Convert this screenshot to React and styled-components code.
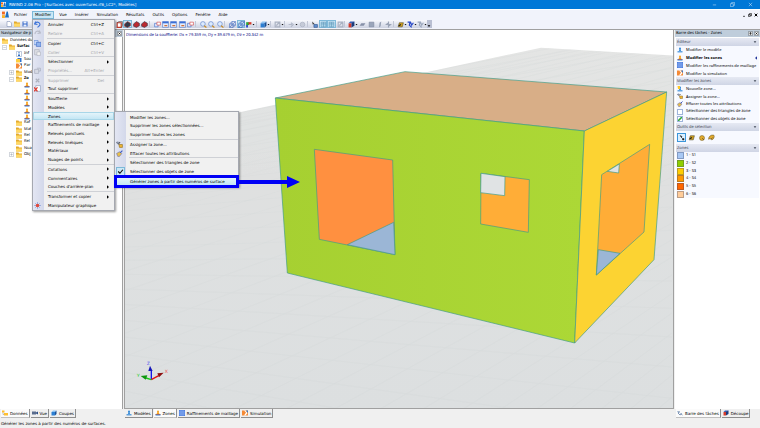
import React from "react";
import styled, { createGlobalStyle, css } from "styled-components";

const ui = '"DejaVu Sans", "Liberation Sans", sans-serif';
const compact = '"Noto Sans", "Liberation Sans", sans-serif';

const GlobalStyle = createGlobalStyle`
  * { box-sizing: border-box; }
  body {
    margin: 0;
    overflow: hidden;
    background: #f0f0f0;
    color: #000;
    font: 4px/7px ${ui};
    text-rendering: geometricPrecision;
  }
  button, input { font: inherit; color: inherit; margin: 0; padding: 0; border: 0; background: none; text-align: left; }
  ul { list-style: none; margin: 0; padding: 0; }
  svg { display: block; }
`;

/* ---------- icons, drawn on a 12 x 12 grid ---------- */

const cone = (x, c = "#2f86d6") => (
  <>
    <circle cx={x} cy="3" r="2" fill={c} />
    <path d={`M${x - 1} 4h2l1 4h-4z`} fill={c} />
    <path d={`M${x - 5} 8h10v3h-10z`} fill={c} opacity=".75" />
  </>
);

const shapes = {
  app: (
    <>
      <path d="M0 0h12v12H0z" fill="#f6f6f6" />
      <path d="M0 1h5v5H0z" fill="#f26a21" />
      <path d="M0 7h5v5H0z" fill="#f7b32b" />
      <path d="M5 11L8 1h2l2 10z" fill="#1c6fc4" />
    </>
  ),
  doc: <path d="M2 1h6l3 3v7H2z" fill="#fff" stroke="#6c7fa8" />,
  folder: (
    <>
      <path d="M0 1h5l1 2h6v8H0z" fill="#e3a92c" />
      <path d="M0 5h12v6H0z" fill="#ffd866" />
    </>
  ),
  save: (
    <>
      <path d="M1 1h10v10H1z" fill="#3567c9" />
      <path d="M3 1h6v4H3zM3 7h6v4H3z" fill="#e8effc" />
    </>
  ),
  undo: <path d="M3 1L1 5l5 1M2 4c4-4 9-1 8 3-1 2-3 3-4 4" fill="none" stroke="#3f74d8" strokeWidth="2" />,
  redo: <path d="M9 1l2 4-5 1M10 4C6 0 1 3 2 7" fill="none" stroke="#b9bdc9" strokeWidth="2" />,
  copy: (
    <>
      <path d="M0 1h7v7H0z" fill="#cfe0fb" stroke="#4a78d0" />
      <path d="M4 4h8v7H4z" fill="#8fb4ee" stroke="#3560c0" />
    </>
  ),
  paste: (
    <>
      <path d="M1 1h8v9H1z" fill="#dcdee4" stroke="#a9adb8" />
      <path d="M5 5h6v6H5z" fill="#f4f4f4" stroke="#a9adb8" />
    </>
  ),
  props: <path d="M1 4h7v7H1zM5 2h6v5H8" fill="#d7dae4" stroke="#a0a6b6" />,
  del: <path d="M3 3l6 6M9 3l-6 6" stroke="#aeb2be" strokeWidth="2" />,
  delAll: (
    <>
      <path d="M3 1h8v10H3z" fill="#fff" stroke="#8090b0" />
      <path d="M0 4l6 7M6 4l-6 7" stroke="#e0372b" strokeWidth="2" />
    </>
  ),
  gizmo: (
    <>
      <path d="M6 0v12M0 6h12M2 2l8 8M10 2l-8 8" stroke="#6f8fd8" />
      <circle cx="6" cy="6" r="3" fill="#e34a3a" />
    </>
  ),
  assign: (
    <>
      <path d="M1 2l3 3 3-3" stroke="#555" strokeWidth="2" fill="none" />
      <circle cx="3" cy="3" r="2" fill="#8792a8" />
      <path d="M5 6h6v5H6z" fill="#f2b632" stroke="#8a6b1c" />
    </>
  ),
  erase: (
    <>
      <path d="M1 6l5-3 4 3-4 5H3z" fill="#e7c04a" stroke="#6d6fb4" />
      <path d="M7 5l4-4" stroke="#3c5bc2" strokeWidth="2" />
    </>
  ),
  info: (
    <>
      <path d="M1 1h10v10H1z" fill="#fff" stroke="#7f96b8" />
      <path d="M6 2v2M6 5v4M4 9h4" stroke="#2b6cc4" strokeWidth="2" />
    </>
  ),
  tunnel: (
    <>
      <path d="M3 2h8v8H3z" fill="#2f74d0" />
      <path d="M0 4h8v7H0z" fill="#ffcf3e" />
    </>
  ),
  sim: (
    <>
      <path d="M0 1h12v10H0z" fill="#f58a35" />
      <path d="M4 1l4 4-4 6h3l4-5-4-5z" fill="#fff" />
      <path d="M8 1h4v5z" fill="#2e7ad1" />
    </>
  ),
  model: cone(6),
  zone: (
    <>
      <circle cx="6" cy="3" r="2" fill="#f6a11d" />
      <path d="M5 4h2l2 4H3z" fill="#f6a11d" />
      <path d="M1 8h10v3H1z" fill="#2e7fcf" />
      <path d="M1 8h10v1H1z" fill="#e2552b" />
    </>
  ),
  newZone: (
    <>
      {cone(6)}
      <path d="M1 0h5v6H2z" fill="#ffc928" />
    </>
  ),
  mesh: (
    <>
      <path d="M0 0h12v12H0z" fill="#4c7fdf" />
      <path d="M0 4h12M0 8h12M4 0v12M8 0v12" stroke="#a4c1f5" />
    </>
  ),
  cubeRed: (
    <>
      <path d="M2 3h7v8H2z" fill="#fff" stroke="#c23a2a" strokeWidth="2" />
      <path d="M2 3l3-2h6v7l-2 3" fill="none" stroke="#333" />
    </>
  ),
  solidDark: <path d="M1 5l5-4 5 3v4l-5 3-5-2z" fill="#303a4c" stroke="#b02a22" />,
  solidRed: <path d="M1 5l5-4 5 3v4l-5 3-5-2z" fill="#bb2a30" stroke="#303a4c" />,
  boxes: (
    <>
      <path d="M1 4h6v6H1z" fill="#dce8ff" stroke="#3a68c8" />
      <path d="M5 2h6v5H5z" fill="#fff" stroke="#d23c3c" />
    </>
  ),
  window: (
    <>
      <path d="M1 1h10v10H1z" fill="#e6eefc" stroke="#4a72c4" />
      <path d="M1 1h10v3H1z" fill="#3b6fd6" />
      <path d="M4 8h5" stroke="#d0672a" strokeWidth="2" />
    </>
  ),
  zoom: (
    <>
      <circle cx="5" cy="5" r="4" fill="#dcebff" stroke="#5578c4" />
      <path d="M7 8l4 3" stroke="#c88a20" strokeWidth="2" />
    </>
  ),
  wire: <path d="M1 5h6v6H1zM5 1h6v6H5zM1 5l4-4M7 11l4-4M7 5l4-4M1 11l4-4" fill="none" stroke="#3563bb" />,
  axes: (
    <>
      <path d="M2 2h5v5H2z" fill="#2da837" />
      <path d="M6 2h5v4H6z" fill="#d63a28" />
      <path d="M2 7h3v4H2z" fill="#2445c8" />
    </>
  ),
  cubeBlue: (
    <>
      <path d="M1 4l3-3h7L8 4z" fill="#8cc3f4" />
      <path d="M1 4h7v7H1z" fill="#2d7fd2" />
      <path d="M8 4l3-3v7l-3 3z" fill="#1a4e94" />
    </>
  ),
  cubeMix: (
    <>
      <path d="M1 4l3-3h7L8 4z" fill="#3a5fb5" />
      <path d="M1 4h5v7H1z" fill="#d33a2c" />
      <path d="M6 4l5-3v7l-5 3z" fill="#1b3c7c" />
    </>
  ),
  sketch: <path d="M2 2h8v8H2zM4 8l5-6" fill="none" stroke="#aab2c2" strokeWidth="2" />,
  steps: <path d="M1 6h6M5 3l4 3-4 4" fill="none" stroke="#b1b8c8" strokeWidth="2" />,
  ring: <circle cx="6" cy="6" r="4" fill="#c6cbd8" stroke="#a4abbb" />,
  pointer: (
    <>
      <path d="M2 1l4 4-3 1z" fill="#333" />
      <path d="M5 6h6v5H5z" fill="#5f8fd0" stroke="#2c4f88" />
    </>
  ),
  pick: <path d="M2 1l3 4 1-2zM4 4l3 3M7 7h3v3H7z" fill="#222" stroke="#222" />,
  panel: <path d="M2 2h8v8H2zM2 5h8M6 2v8" fill="#a9d4e8" stroke="#5f94b8" />,
  plane: <path d="M1 8l3-4h7L8 8z" fill="#8791a8" />,
  square: <path d="M2 2h8v8H2z" fill="#9aa5ba" stroke="#7c879d" />,
  slant: <path d="M5 11l1-8 3-2-1 8z" fill="#98a2b6" />,
  cross: <path d="M6 1v10M1 6h10M3 4l6 4" stroke="#9aa3b6" strokeWidth="2" />,
  fill: (
    <>
      <path d="M2 10L4 3h7l-2 7z" fill="#d8a51d" stroke="#4d4526" />
      <path d="M3 8l4-2" stroke="#222" strokeWidth="2" />
    </>
  ),
  net: <path d="M1 2h5l2 5 3-4M5 3l-1 4 4 4" fill="none" stroke="#2848c8" strokeWidth="2" />,
  netGray: <path d="M1 2h5l2 5 3-4M5 3l-1 4 4 4" fill="none" stroke="#9aa6bc" strokeWidth="2" />,
  circle: (
    <>
      <circle cx="6" cy="6" r="5" fill="#e3ab2c" stroke="#6e5c28" />
      <path d="M6 6l4 4" stroke="#333" />
    </>
  ),
  lasso: (
    <>
      <path d="M1 9c0-5 4-8 9-7 2 3-1 8-4 8-1-3-3-2-5-1z" fill="#e3ab2c" stroke="#6e5c28" />
      <path d="M5 9l3-3" stroke="#333" />
    </>
  ),
  eye: (
    <>
      <path d="M0 3h8v6H0z" fill="#5a6d8e" />
      <path d="M8 5l4-2v6L8 7z" fill="#2f4f86" />
    </>
  ),
  tools: <path d="M1 2l4 4M5 2L2 6l4 4 4-3M7 7l4 3" fill="none" stroke="#7d94b6" strokeWidth="2" />,
  tree: (
    <>
      <path d="M0 1h5v4H0zM4 6h8v5H4z" fill="#ffbf2d" />
      <path d="M2 5v4h2" fill="none" stroke="#888" />
    </>
  ),
  check: <path d="M2 6l3 3 5-6" fill="none" stroke="#111" strokeWidth="2" />,
  minimize: <path d="M2 7h8" stroke="currentColor" strokeWidth="1" />,
  restore: <path d="M1 4h7v7H1zM4 4V1h7v7H8" fill="none" stroke="currentColor" strokeWidth="1" />,
  close: <path d="M2 2l8 8M10 2l-8 8" stroke="currentColor" strokeWidth="1" />,
  minimizeBold: <path d="M3 10h6" stroke="currentColor" strokeWidth="2" />,
  restoreBold: <path d="M1 5h6v5H1zM4 5V2h7v6H8" fill="none" stroke="currentColor" strokeWidth="2" />,
  closeBold: <path d="M2 2l8 8M10 2l-8 8" stroke="currentColor" strokeWidth="3" />,
  pin: <path d="M4 2h4v5H4zM2 7h8M6 7v4" fill="none" stroke="currentColor" strokeWidth="2" />,
  down: <path d="M2 4h8l-4 5z" fill="currentColor" />,
  right: <path d="M3 1v10l6-5z" fill="currentColor" />,
  left: <path d="M9 1v10L3 6z" fill="#25379b" />,
  plus: <path d="M1 1h10v10H1zM3 6h6M6 3v6" fill="#fff" stroke="#8b95a5" />,
  minus: <path d="M1 1h10v10H1zM3 6h6" fill="#fff" stroke="#8b95a5" />,
};

const Glyph = styled.svg`
  width: ${(p) => p.$size}px;
  height: ${(p) => p.$size}px;
  flex: none;
`;
const Icon = ({ name, size = 6 }) => (
  <Glyph viewBox="0 0 12 12" $size={size} aria-hidden="true">{shapes[name]}</Glyph>
);

/* ---------- window chrome ---------- */

const Window = styled.div`
  display: grid;
  grid-template-rows: 9px 10px 11px minmax(0, 1fr) 9px;
  height: 100vh;
`;
const TitleBar = styled.header`
  display: flex;
  align-items: center;
  gap: 3px;
  padding: 0 7px 0 1px;
  background: #0078d7;
  color: #fff;
`;
const Title = styled.span`
  flex: 1;
  white-space: nowrap;
`;
const WindowButtons = styled.div`
  display: flex;
  align-items: center;
  gap: ${(p) => p.$gap}px;
  margin-left: auto;
`;
const IconButton = styled.button`
  display: flex;
  align-items: center;
  justify-content: center;
`;
const MenuBar = styled.nav`
  display: flex;
  align-items: center;
  gap: 2px;
  padding: 0 2px;
  background: #f1f3fb;
  border-top: 1px solid #fff;
`;
const MenuSlot = styled.div`
  position: relative;
`;
const MenuTitle = styled.button`
  display: block;
  height: 8px;
  padding: 0 3px;
  line-height: 8px;
  ${(p) => p.$open && css`
    box-shadow: inset 0 0 0 1px #7db9d8;
    background: #cbe8f6;
  `}
`;

/* ---------- drop-down menus ---------- */

const MenuPanel = styled.ul`
  position: absolute;
  z-index: 5;
  display: flex;
  flex-direction: column;
  padding-top: 1px;
  border: 1px solid #a5a8b0;
  background: linear-gradient(90deg, #e3e6f3, #d3d8ea 11px, #f1f1f1 11px);
  box-shadow: 1px 1px 2px rgba(0, 0, 0, 0.4);
  ${(p) => p.$sub
    ? css`left: 81px; top: -1px; width: 125px; height: 76px;`
    : css`left: 0; top: 8px; width: 83px; height: 192px;`}
`;
const MenuRow = styled.li`
  position: relative;
  flex: 1;
  min-height: 0;
`;
const MenuRule = styled.li`
  height: 1px;
  margin-left: 14px;
  background: #cfd1d6;
`;
const MenuAction = styled.button`
  display: grid;
  grid-template-columns: 11px 1fr auto 8px;
  align-items: center;
  width: 100%;
  height: 100%;
  padding-left: 1px;
  white-space: nowrap;
  color: ${(p) => (p.$off ? "#a3a5ab" : "#000")};
  ${(p) => p.$lit && css`
    background: linear-gradient(#e9f6fb, #bfe4f3);
    box-shadow: inset 0 0 0 1px #a8d6e8;
  `}
`;
const MenuLabel = styled.span`
  padding-left: 3px;
`;
const Shortcut = styled.span`
  padding-right: 2px;
`;
const Tick = styled.span`
  display: grid;
  place-items: center;
  width: 9px;
  height: 9px;
  background: #cbe8f6;
  border: 1px solid #7db9d8;
`;
const Callout = styled.span`
  position: absolute;
  inset: -2px -1px;
  border: 3px solid #0000f5;
  pointer-events: none;
`;
const CalloutArrow = styled.svg`
  position: absolute;
  left: 100%;
  top: -1px;
  width: 62px;
  height: 12px;
  pointer-events: none;
`;

const zoneMenu = [
  { t: "Modifier les zones..." },
  { t: "Supprimer les zones sélectionnées..." },
  { t: "Supprimer toutes les zones" },
  null,
  { t: "Assigner la zone...", i: "assign" },
  { t: "Effacer toutes les attributions", i: "erase" },
  null,
  { t: "Sélectionner des triangles de zone" },
  { t: "Sélectionner des objets de zone", tick: true },
  null,
  { t: "Générer zones à partir des numéros de surface", lit: true, callout: true },
];

const editMenu = [
  { t: "Annuler", i: "undo", k: "Ctrl+Z" },
  { t: "Refaire", i: "redo", k: "Ctrl+A", off: true },
  null,
  { t: "Copier", i: "copy", k: "Ctrl+C" },
  { t: "Coller", i: "paste", k: "Ctrl+V", off: true },
  null,
  { t: "Sélectionner", more: true },
  { t: "Propriétés...", i: "props", k: "Alt+Enter", off: true },
  null,
  { t: "Supprimer", i: "del", k: "Del", off: true },
  { t: "Tout supprimer", i: "delAll" },
  null,
  { t: "Soufflerie", more: true },
  { t: "Modèles", more: true },
  { t: "Zones", more: true, lit: true, sub: zoneMenu },
  { t: "Raffinements de maillage", more: true },
  { t: "Relevés ponctuels", more: true },
  { t: "Relevés linéiques", more: true },
  { t: "Matériaux", more: true },
  { t: "Nuages de points", more: true },
  null,
  { t: "Cotations", more: true },
  { t: "Commentaires", more: true },
  { t: "Couches d'arrière-plan", more: true },
  null,
  { t: "Transformer et copier", more: true },
  { t: "Manipulateur graphique", i: "gizmo" },
];

function Menu({ items, label, sub }) {
  return (
    <MenuPanel $sub={sub} role="menu" aria-label={label}>
      {items.map((m, n) =>
        m === null ? (
          <MenuRule key={n} role="separator" />
        ) : (
          <MenuRow key={m.t} role="none">
            <MenuAction
              role={m.tick ? "menuitemcheckbox" : "menuitem"}
              aria-checked={m.tick}
              aria-haspopup={m.more ? "menu" : undefined}
              disabled={m.off}
              $off={m.off}
              $lit={m.lit}
            >
              {m.tick ? <Tick><Icon name="check" size={7} /></Tick> : m.i ? <Icon name={m.i} size={7} /> : <span />}
              <MenuLabel>{m.t}</MenuLabel>
              {m.k ? <Shortcut>{m.k}</Shortcut> : <span />}
              {m.more && <Icon name="right" size={4} />}
            </MenuAction>
            {m.sub && <Menu items={m.sub} label={m.t} sub />}
            {m.callout && (
              <>
                <Callout />
                <CalloutArrow viewBox="0 0 62 12" aria-hidden="true">
                  <path d="M0 4h49V0l13 6-13 6V8H0z" fill="#0000f5" />
                </CalloutArrow>
              </>
            )}
          </MenuRow>
        )
      )}
    </MenuPanel>
  );
}

/* ---------- toolbar ---------- */

const ToolBar = styled.div`
  display: flex;
  background: #f1f3fb;
  border-bottom: 1px solid #a0a0a0;
  padding: 1px 0;
`;
const Strip = styled.div`
  display: flex;
  align-items: stretch;
  width: ${(p) => p.$width}px;
  padding-left: ${(p) => p.$pad || 0}px;
  background: linear-gradient(#f8f9fd, #cdd2e1);
`;
const FileTool = styled(IconButton)`
  width: 8px;
`;
const Tool = styled.button`
  display: flex;
  flex: ${(p) => (p.$drop ? 11 : 9)} 1 0;
  align-items: center;
  justify-content: center;
  min-width: 0;
  ${(p) => p.$on && css`
    background: #c4e3f3;
    box-shadow: inset 0 0 0 1px #7fb9d9;
  `}
`;
const ToolRule = styled.span`
  flex: 3 1 0;
  margin: 1px 0;
  border-left: 1px solid #c2c7d6;
`;
const Overflow = styled.button`
  display: flex;
  flex: 5 1 0;
  align-items: flex-end;
  background: #b9bfd2;
`;

const tools = (
  "cubeRed solidDark* solidRed solidRed | boxes window window window boxes | zoom zoom zoom | " +
  "wire wire* axes+ | cubeBlue+ | sketch+ | steps+ ring | pointer panel* panel* sketch | " +
  "cubeMix+ plane square slant cross | fill+ net+ netGray+"
).split(" ");

/* ---------- docked panels ---------- */

const Main = styled.main`
  display: grid;
  grid-template-columns: 123px minmax(0, 1fr) 85px;
  column-gap: 1px;
  min-height: 0;
`;
const Dock = styled.section`
  display: grid;
  grid-template-rows: ${(p) => (p.$bare ? "" : "7px")} minmax(0, 1fr) 10px;
  min-width: 0;
`;
const DockHeader = styled.header`
  display: flex;
  align-items: center;
  justify-content: space-between;
  padding: 0 1px;
  background: #bfcddb;
  white-space: nowrap;
  font: 4px/7px ${compact};
`;
const DockButtons = styled.div`
  display: flex;
  gap: 1px;
`;
const DockButton = styled(IconButton)`
  width: 5px;
  height: 5px;
  background: #f2f2f2;
  outline: 1px solid #9ba3ab;
  outline-offset: -1px;
`;
const Tree = styled.ul`
  background: #fff;
  padding-top: 1px;
  border-right: 1px solid #a0a0a0;
`;
const TreeRows = styled.div`
  display: grid;
  grid-auto-rows: 1fr;
  height: 120px;
`;
const TreeRow = styled.li`
  display: flex;
  align-items: center;
  gap: 2px;
  min-height: 0;
  padding-left: ${(p) => p.$indent}px;
  font: ${(p) => (p.$bold ? "bold" : "normal")} 4px/6px ${compact};
  white-space: nowrap;
`;
const tree = [
  [2, "folder", "Données du"],
  [2, "folder", "Surfac", "minus", true],
  [16, "info", "Inf"],
  [16, "tunnel", "Sou"],
  [16, "sim", "Par"],
  [9, "folder", "Mod", "plus"],
  [9, "folder", "Zo", "minus", true],
  [24, "zone"], [24, "zone"], [24, "zone"], [24, "zone"], [24, "zone"], [24, "zone"],
  [16, "folder", "Raf"],
  [16, "folder", "Mat"],
  [16, "folder", "Rel"],
  [16, "folder", "Rel"],
  [16, "folder", "Nua"],
  [9, "folder", "Obj", "plus"],
];

const Tabs = styled.div`
  display: flex;
  align-items: flex-start;
  gap: 1px;
  padding-left: 1px;
`;
const Tab = styled.button`
  display: flex;
  align-items: center;
  gap: 2px;
  height: 9px;
  padding: 0 1px;
  white-space: nowrap;
  border-right: 1px solid #8e8e8e;
  border-bottom: 1px solid ${(p) => (p.$on ? "#c0c0c0" : "#8e8e8e")};
  background: ${(p) => (p.$on ? "#fbfbfb" : "#f0f0f0")};
`;
const TabSet = ({ items, label }) => (
  <Tabs role="tablist" aria-label={label}>
    {items.map(([icon, text, on]) => (
      <Tab key={text} role="tab" aria-selected={!!on} $on={on}>
        <Icon name={icon} />
        {text}
      </Tab>
    ))}
  </Tabs>
);

/* ---------- task panel ---------- */

const TaskBody = styled.div`
  padding: 1px 1px 0;
  background: #fff;
  overflow: hidden;
  font: 4px/7px ${compact};
`;
const SectionHeader = styled.h2`
  display: flex;
  align-items: center;
  justify-content: space-between;
  height: 8px;
  margin: 0;
  padding: 0 2px 0 1px;
  font: inherit;
  color: #3c4452;
  background: linear-gradient(#e6e9f3, #cfd5e5);
`;
const SectionBody = styled.ul`
  display: grid;
  grid-auto-rows: 1fr;
  height: ${(p) => p.$height}px;
  background: #f7f9ff;
`;
const TaskRow = styled.li`
  display: flex;
  align-items: center;
  min-height: 0;
  padding: 0 1px;
`;
const taskLine = css`
  display: flex;
  flex: 1;
  align-items: center;
  gap: 3px;
  white-space: nowrap;
`;
const TaskLink = styled.button`
  ${taskLine}
  font-weight: ${(p) => (p.$bold ? "bold" : "normal")};
`;
const TaskCheck = styled.label`
  ${taskLine}
`;
const CheckBox = styled.input.attrs({ type: "checkbox" })`
  appearance: none;
  width: 6px;
  height: 6px;
  border: 1px solid #9fb4da;
  background: #fff;
  &:checked { background: linear-gradient(135deg, #fff 25%, #35a83c 45%, #35a83c 55%, #fff 75%); }
`;
const PickTools = styled.div`
  display: flex;
  align-items: center;
  gap: 1px;
  height: 13px;
  padding-left: 1px;
  background: #f7f9ff;
`;
const PickTool = styled(IconButton)`
  width: 9px;
  height: 9px;
  border: 1px solid ${(p) => (p.$on ? "#3b96da" : "transparent")};
  background: ${(p) => (p.$on ? "#dcefff" : "none")};
`;
const Swatch = styled.span`
  width: 7px;
  height: 7px;
  border: 1px solid rgba(60, 70, 100, 0.35);
  background: ${(p) => p.$color};
`;
const ZoneLabel = styled.span`
  padding-left: 2px;
`;

const SectionTitle = ({ children }) => (
  <SectionHeader>
    {children}
    <Icon name="down" size={4} />
  </SectionHeader>
);

/* ---------- 3D view ---------- */

const View = styled.div`
  position: relative;
  overflow: hidden;
  background: #fff;
  border: 1px solid #a0a0a0;
  border-top: 0;
`;
const Scene = styled.svg`
  width: 100%;
  height: 100%;
`;
const Dimensions = styled.p`
  position: absolute;
  left: 1px;
  top: 2px;
  margin: 0;
  font: 4px/7px ${compact};
  color: #000080;
  white-space: nowrap;
`;
const AxisName = styled.text`
  font: 14px "Liberation Sans", sans-serif;
`;

const range = (n) => Array.from({ length: n }, (_, i) => i);

function Building() {
  return (
    <Scene viewBox="-435 -91 1644 1134" preserveAspectRatio="xMidYMid slice" role="img" aria-label="Modèle 3D">
      <defs>
        <linearGradient id="ground" x1="0" y1="0" x2="0" y2="1">
          <stop offset="0" stopColor="#e4e5e4" />
          <stop offset=".35" stopColor="#dfe1e1" />
          <stop offset="1" stopColor="#dcdfe0" />
        </linearGradient>
        <linearGradient id="front" x1="0" y1="0" x2="1" y2="0">
          <stop offset="0" stopColor="#a6d031" />
          <stop offset="1" stopColor="#acd836" />
        </linearGradient>
        <clipPath id="floor">
          <path d="M-438 230L813 -38 1212 -14V1050H-438z" />
        </clipPath>
      </defs>
      <path d="M-438 230L813 -38 1212 -14V1050H-438z" fill="url(#ground)" />
      <g clipPath="url(#floor)" fill="none" stroke="#cfd3d4" strokeWidth="1" opacity=".55">
        {range(34).map((i) => (
          <path key={`a${i}`} d={`M-438 ${200 + i * (9 + i)}L1206 ${-120 + i * (12 + i * 2)}`} />
        ))}
        {range(34).map((i) => (
          <path key={`b${i}`} d={`M-438 ${260 + i * (12 + i * 2)}L1206 ${-100 + i * (7 + i)}`} />
        ))}
      </g>
      <g stroke="#3f9c86" strokeWidth="2" strokeLinejoin="round">
        <path d="M16 113L405 34 1190 95 943 212z" fill="#d8ae87" />
        <path d="M16 113L943 212 914 848 52 638z" fill="url(#front)" />
        <path d="M943 212L1190 95 1152 598 914 848z" fill="#fcd332" />
        <path d="M133 267L368 299 375 583 148 537z" fill="#ff9040" />
        <path d="M371 486L375 583 232 553z" fill="#9bb6d6" />
        <path d="M633 339L778 358 775 516 632 491z" fill="#ffad37" />
        <path d="M633 339L705 349 704 406 632 397z" fill="#e0e3e4" />
        <path d="M995 343L1139 252 1122 515 979 644z" fill="#ffad37" />
        <path d="M985 568L1050 579 979 644z" fill="#9bb6d6" />
        <path d="M1012 333L1048 311 1046 338z" fill="#e0e3e4" />
      </g>
      <g strokeWidth="4">
        <path d="M-356 958v-28" stroke="#1414e8" />
        <path d="M-365 932l5-16 8 16z" fill="#1414b8" stroke="none" />
        <path d="M-356 958l22-12" stroke="#e01010" />
        <path d="M-338 939l19-2-14 14z" fill="#8e1010" stroke="none" />
        <path d="M-356 958l-16-5" stroke="#18c818" />
        <path d="M-388 947l20-2-5 13z" fill="#0e960e" stroke="none" />
      </g>
      <AxisName x="-369" y="914" fill="#3a3af0">Z</AxisName>
      <AxisName x="-316" y="939" fill="#f03a3a">X</AxisName>
      <AxisName x="-400" y="950" fill="#1ad01a">Y</AxisName>
    </Scene>
  );
}

const StatusBar = styled.footer`
  padding: 0 1px;
  line-height: 9px;
  background: #f0f0f0;
`;

const menus = ["Vue", "Insérer", "Simulation", "Résultats", "Outils", "Options", "Fenêtre", "Aide"];
const zones = ["#a8c8f4", "#8fce00", "#ffcc00", "#ff9900", "#ff6600", "#ffcc99"];

export default function App() {
  return (
    <Window>
      <GlobalStyle />
      <TitleBar>
        <Icon name="app" size={5} />
        <Title>RWIND 2.06 Pro - [Surfaces avec ouvertures.rf6_LC2*, Modèles]</Title>
        <WindowButtons $gap={13}>
          <IconButton aria-label="Réduire"><Icon name="minimize" size={5} /></IconButton>
          <IconButton aria-label="Restaurer"><Icon name="restore" size={5} /></IconButton>
          <IconButton aria-label="Fermer"><Icon name="close" size={5} /></IconButton>
        </WindowButtons>
      </TitleBar>

      <MenuBar>
        <Icon name="app" size={7} />
        <MenuTitle>Fichier</MenuTitle>
        <MenuSlot>
          <MenuTitle $open aria-expanded="true">Modifier</MenuTitle>
          <Menu items={editMenu} label="Modifier" />
        </MenuSlot>
        {menus.map((m) => <MenuTitle key={m}>{m}</MenuTitle>)}
        <WindowButtons $gap={2}>
          <IconButton aria-label="Réduire le document"><Icon name="minimizeBold" size={4} /></IconButton>
          <IconButton aria-label="Restaurer le document"><Icon name="restoreBold" size={4} /></IconButton>
          <IconButton aria-label="Fermer le document"><Icon name="closeBold" size={4} /></IconButton>
        </WindowButtons>
      </MenuBar>

      <ToolBar>
        <Strip $width={115} $pad={5}>
          {[["doc", "Nouveau"], ["folder", "Ouvrir"], ["save", "Enregistrer"]].map(([i, t]) => (
            <FileTool key={i} aria-label={t}><Icon name={i} /></FileTool>
          ))}
        </Strip>
        <Strip $width={317}>
          {tools.map((t, n) => {
            if (t === "|") return <ToolRule key={n} />;
            const name = t.replace(/[*+]/, "");
            return (
              <Tool key={n} aria-label={name} $on={t.endsWith("*")} $drop={t.endsWith("+")}>
                <Icon name={name} size={7} />
                {t.endsWith("+") && <Icon name="down" size={3} />}
              </Tool>
            );
          })}
          <Overflow aria-label="Plus d'outils"><Icon name="down" size={4} /></Overflow>
        </Strip>
      </ToolBar>

      <Main>
        <Dock>
          <DockHeader>
            Navigateur de p
            <DockButton aria-label="Fermer le navigateur"><Icon name="closeBold" size={3} /></DockButton>
          </DockHeader>
          <Tree>
            <TreeRows>
              {tree.map(([indent, icon, text, box, bold], n) => (
                <TreeRow key={n} $indent={indent} $bold={bold}>
                  {box && <Icon name={box} size={5} />}
                  <Icon name={icon} />
                  {text}
                </TreeRow>
              ))}
            </TreeRows>
          </Tree>
          <TabSet label="Navigateur" items={[["tree", "Données", true], ["eye", "Vue"], ["cubeBlue", "Coupes"]]} />
        </Dock>

        <Dock $bare>
          <View>
            <Building />
            <Dimensions>Dimensions de la soufflerie: Dx = 79.359 m, Dy = 39.679 m, Dz = 20.342 m</Dimensions>
          </View>
          <TabSet
            label="Vues"
            items={[["model", "Modèles"], ["zone", "Zones", true], ["mesh", "Raffinements de maillage"], ["sim", "Simulation"]]}
          />
        </Dock>

        <Dock>
          <DockHeader>
            Barre des tâches - Zones
            <DockButtons>
              <DockButton aria-label="Épingler"><Icon name="pin" size={3} /></DockButton>
              <DockButton aria-label="Fermer la barre"><Icon name="closeBold" size={3} /></DockButton>
            </DockButtons>
          </DockHeader>
          <TaskBody>
            <SectionTitle>Éditeur</SectionTitle>
            <SectionBody $height={31}>
              <TaskRow><TaskLink><Icon name="model" />Modifier le modèle</TaskLink></TaskRow>
              <TaskRow>
                <TaskLink $bold><Icon name="zone" />Modifier les zones</TaskLink>
                <Icon name="left" size={4} />
              </TaskRow>
              <TaskRow><TaskLink><Icon name="mesh" />Modifier les raffinements de maillage</TaskLink></TaskRow>
              <TaskRow><TaskLink><Icon name="sim" />Modifier la simulation</TaskLink></TaskRow>
            </SectionBody>
            <SectionTitle>Modifier les zones</SectionTitle>
            <SectionBody $height={38}>
              <TaskRow><TaskLink><Icon name="newZone" />Nouvelle zone...</TaskLink></TaskRow>
              <TaskRow><TaskLink><Icon name="assign" />Assigner la zone...</TaskLink></TaskRow>
              <TaskRow><TaskLink><Icon name="erase" />Effacer toutes les attributions</TaskLink></TaskRow>
              <TaskRow><TaskCheck><CheckBox />Sélectionner des triangles de zone</TaskCheck></TaskRow>
              <TaskRow><TaskCheck><CheckBox defaultChecked />Sélectionner des objets de zone</TaskCheck></TaskRow>
            </SectionBody>
            <SectionTitle>Outils de sélection</SectionTitle>
            <PickTools>
              <PickTool $on aria-label="Sélection par clic"><Icon name="pick" /></PickTool>
              <PickTool aria-label="Sélection par plan"><Icon name="fill" size={7} /></PickTool>
              <PickTool aria-label="Sélection par cercle"><Icon name="circle" /></PickTool>
              <PickTool aria-label="Sélection au lasso"><Icon name="lasso" size={7} /></PickTool>
            </PickTools>
            <SectionTitle>Zones</SectionTitle>
            <SectionBody $height={46}>
              {zones.map((c, i) => (
                <TaskRow key={c}>
                  <Swatch $color={c} />
                  <ZoneLabel>{`${i + 1} - S${i + 1}`}</ZoneLabel>
                </TaskRow>
              ))}
            </SectionBody>
          </TaskBody>
          <TabSet label="Tâches" items={[["tools", "Barre des tâches", true], ["cubeMix", "Découpe"]]} />
        </Dock>
      </Main>

      <StatusBar>Générer les zones à partir des numéros de surfaces.</StatusBar>
    </Window>
  );
}
